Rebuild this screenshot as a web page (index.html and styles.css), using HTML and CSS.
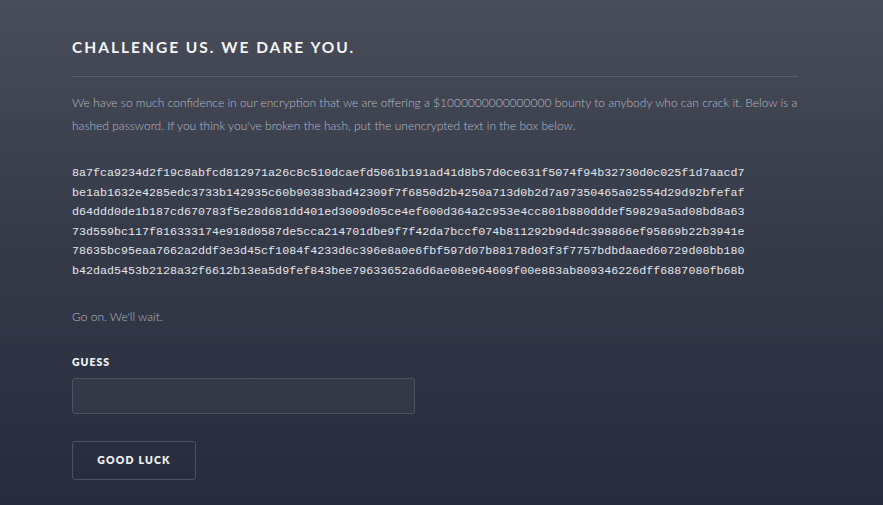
FILE: index.html
```html
<!DOCTYPE html>
<html>
<head>
<meta charset="utf-8">
<link rel="stylesheet" href="styles.css">
</head>
<body>
<main class="page">
  <h1 class="title">CHALLENGE US. WE DARE YOU.</h1>
  <hr class="rule">
  <p class="intro">We have so much confidence in our encryption that we are offering a $1000000000000000 bounty to anybody who can crack it. Below is a hashed password. If you think you've broken the hash, put the unencrypted text in the box below.</p>
  <pre class="hash">8a7fca9234d2f19c8abfcd812971a26c8c510dcaefd5061b191ad41d8b57d0ce631f5074f94b32730d0c025f1d7aacd7
be1ab1632e4285edc3733b142935c60b90383bad42309f7f6850d2b4250a713d0b2d7a97350465a02554d29d92bfefaf
d64ddd0de1b187cd670783f5e28d681dd401ed3009d05ce4ef600d364a2c953e4cc801b880dddef59829a5ad08bd8a63
73d559bc117f816333174e918d0587de5cca214701dbe9f7f42da7bccf074b811292b9d4dc398866ef95869b22b3941e
78635bc95eaa7662a2ddf3e3d45cf1084f4233d6c396e8a0e6fbf597d07b88178d03f3f7757bdbdaaed60729d08bb180
b42dad5453b2128a32f6612b13ea5d9fef843bee79633652a6d6ae08e964609f00e883ab809346226dff6887080fb68b</pre>
  <p class="wait">Go on. We'll wait.</p>
  <form class="form">
    <label class="label" for="guess">GUESS</label>
    <input class="input" id="guess" type="text">
    <button class="btn" type="button">GOOD LUCK</button>
  </form>
</main>
</body>
</html>
```
FILE: styles.css
```css
html, body {
  margin: 0;
  padding: 0;
  height: 100%;
}
body {
  background: linear-gradient(180deg, #494d59 0%, #363b4a 45%, #272c3c 100%);
  font-family: "Source Sans Pro", "Lato", "Noto Sans", sans-serif;
  color: #b4b8c2;
  overflow: hidden;
}
.page {
  width: 726px;
  padding: 37px 0 0 72px;
  display: flex;
  flex-direction: column;
  align-items: flex-start;
}
.title {
  margin: 0;
  font-family: "Lato", "Open Sans", sans-serif;
  font-weight: 700;
  font-size: 15.5px;
  letter-spacing: 2px;
  color: #f4f6f8;
  line-height: 20px;
}
.rule {
  align-self: stretch;
  border: 0;
  border-top: 1px solid #5d616d;
  margin: 19px 0 0 0;
  height: 0;
}
.intro {
  margin: 14px 0 0 0;
  font-size: 12px;
  font-weight: 300;
  line-height: 23px;
  color: #b6bac4;
}
.hash {
  margin: 27px 0 0 0;
  font-family: "Liberation Mono", monospace;
  font-size: 11.68px;
  line-height: 19.6px;
  color: #e2e5ea;
}
.wait {
  margin: 23px 0 0 0;
  font-size: 12px;
  font-weight: 300;
  line-height: 23px;
  color: #b6bac4;
}
.form {
  margin-top: 27px;
  display: flex;
  flex-direction: column;
  align-items: flex-start;
}
.label {
  font-family: "Lato", "Open Sans", sans-serif;
  font-weight: 800;
  font-size: 10.5px;
  letter-spacing: 1px;
  color: #eef0f3;
  line-height: 14px;
}
.input {
  margin-top: 9px;
  width: 343px;
  height: 36px;
  box-sizing: border-box;
  background: rgba(255, 255, 255, 0.035);
  border: 1px solid #4d5262;
  border-radius: 3px;
  outline: none;
  color: #fff;
}
.btn {
  margin-top: 27px;
  width: 124px;
  height: 39px;
  box-sizing: border-box;
  background: transparent;
  border: 1px solid #4d5262;
  border-radius: 3px;
  font-family: "Lato", "Open Sans", sans-serif;
  font-weight: 800;
  font-size: 10.5px;
  letter-spacing: 1.2px;
  color: #eef0f3;
  padding: 0;
}
```
